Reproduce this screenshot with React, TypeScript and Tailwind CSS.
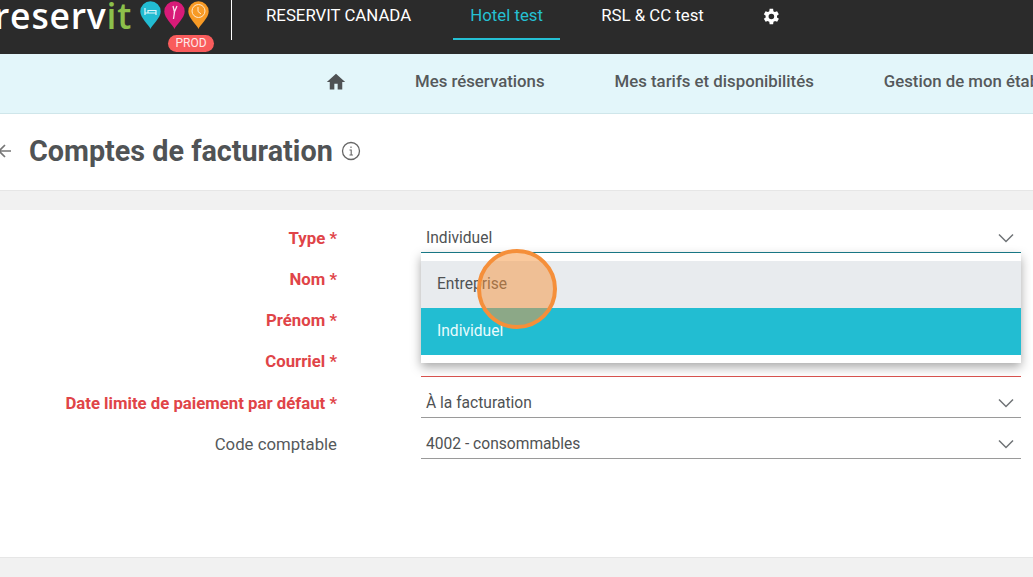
const tabs = [
  { label: 'RESERVIT CANADA', active: false, box: 'ml-[34px] mr-[42px] px-0' },
  { label: 'Hotel test', active: true, box: 'w-[107px] justify-center' },
  { label: 'RSL & CC test', active: false, box: 'ml-[41px] px-0' },
];

const menu = ['Mes réservations', 'Mes tarifs et disponibilités', 'Gestion de mon établissement'];

const rows = [
  { label: 'Type *', value: 'Individuel', required: true, select: true, line: 'border-[#1a7f8e]' },
  { label: 'Nom *', value: '', required: true, select: false, line: 'border-transparent' },
  { label: 'Prénom *', value: '', required: true, select: false, line: 'border-transparent' },
  { label: 'Courriel *', value: '', required: true, select: false, line: 'border-[#d9534f]' },
  { label: 'Date limite de paiement par défaut *', value: 'À la facturation', required: true, select: true, line: 'border-[#9a9a9a]' },
  { label: 'Code comptable', value: '4002 - consommables', required: false, select: true, line: 'border-[#9a9a9a]' },
];

function Pin({ color, children }: { color: string; children: React.ReactNode }) {
  return (
    <svg width="21" height="28" viewBox="0 0 21 28">
      <path d="M10.5 28 C9 24 0.3 17 0.3 10.5 a10.200 10.200 0 0 1 20.400 0 C20.700 17 12 24 10.500 28Z" fill={color} />
      {children}
    </svg>
  );
}

function Logo() {
  return (
    <div className="relative w-[231px] h-full shrink-0">
      <div className="absolute left-[-6px] top-[-5px] text-[35.500px] leading-[40px] tracking-[0.8px] text-white font-['Open_Sans',sans-serif] font-semibold whitespace-nowrap">
        reserv<span className="text-[#8cc04b]">it</span>
      </div>
      <div className="absolute left-[140px] top-[1px] flex gap-[3px]">
        <Pin color="#22bcd2">
          <path d="M5 7v7M5 12h11v2M16 12V9.500H8V12" fill="none" stroke="#dff6fa" strokeWidth="1.200" />
        </Pin>
        <Pin color="#d81b78">
          <path d="M9 5l1.500 6-1 7M13 5l-3 7" fill="none" stroke="#fbe4ef" strokeWidth="1.300" />
        </Pin>
        <Pin color="#f79a25">
          <circle cx="10.500" cy="10" r="6.500" fill="none" stroke="#fde9cd" strokeWidth="1" />
          <path d="M10 6v4.500l3 2.500" fill="none" stroke="#fde9cd" strokeWidth="1" />
        </Pin>
      </div>
      <span className="absolute left-[168px] top-[35px] h-[17px] w-[46px] rounded-full bg-[#f95c5c] text-[#fde8e8] text-[12px] leading-[17px] text-center">
        PROD
      </span>
    </div>
  );
}

function Chevron() {
  return (
    <svg width="16" height="10" viewBox="0 0 16 10" fill="none" stroke="#6f7376" strokeWidth="1.500" className="mt-[5px] shrink-0">
      <path d="M1 1.500 8 8.500 15 1.500" />
    </svg>
  );
}

export default function App() {
  return (
    <div className="w-[1033px] h-[577px] overflow-hidden bg-white font-['Roboto',sans-serif] text-[#4f5254] relative">
      {/* Top bar */}
      <header className="h-[54px] bg-[#2b2b2b] flex">
        <Logo />
        <div className="w-px h-[40px] bg-white shrink-0" />
        <nav className="flex text-white text-[16.800px] whitespace-nowrap">
          {tabs.map((t) => (
            <div
              key={t.label}
              className={`h-[40px] flex items-center pb-[6px] border-b-2 ${t.box} ${
                t.active ? 'text-[#25c0d3] border-[#25c0d3]' : 'border-transparent'
              }`}
            >
              {t.label}
            </div>
          ))}
          <div className="h-[32px] flex items-center ml-[56px]">
            <svg width="21" height="21" viewBox="0 0 24 24" fill="white">
              <path fillRule="evenodd" d="M19.400 13a7.800 7.800 0 0 0 0-2l2.100-1.600-2-3.500-2.500 1a7.600 7.600 0 0 0-1.700-1L15 3.200h-4l-.4 2.700a7.600 7.600 0 0 0-1.700 1l-2.500-1-2 3.500L6.500 11a7.800 7.800 0 0 0 0 2l-2.100 1.600 2 3.500 2.500-1a7.600 7.600 0 0 0 1.700 1l.4 2.700h4l.4-2.700a7.600 7.600 0 0 0 1.700-1l2.500 1 2-3.500L19.400 13ZM13 15.200a3.200 3.200 0 1 1 0-6.400 3.200 3.200 0 0 1 0 6.400Z" />
            </svg>
          </div>
        </nav>
      </header>

      {/* Secondary menu */}
      <div className="h-[60px] bg-[#e3f6fa] border-b border-[#cfe6ea] flex items-center whitespace-nowrap text-[16.800px] font-medium text-[#55595b] pl-[326px] pb-[4px]">
        <svg width="20" height="20" viewBox="0 0 24 24" fill="#4f5254" className="shrink-0">
          <path d="M10 21v-7h4v7h5.500v-9H23L12 2 1 12h3.500v9Z" />
        </svg>
        <div className="flex gap-[70px] ml-[69px]">
          {menu.map((m) => (
            <span key={m}>{m}</span>
          ))}
        </div>
      </div>

      {/* Title */}
      <div className="h-[77px] flex items-center border-b border-[#e6e6e6] pb-[2px]">
        <svg width="12" height="16" viewBox="0 0 12 16" fill="none" stroke="#777" strokeWidth="1.700" className="shrink-0 -ml-[1px]">
          <path d="M12 8H0M6 2 0 8 6 14" />
        </svg>
        <h1 className="ml-[18px] text-[28.750px] font-bold text-[#505355] leading-none">Comptes de facturation</h1>
        <svg width="20" height="20" viewBox="0 0 20 20" fill="none" stroke="#666" className="ml-[8px] shrink-0">
          <circle cx="10" cy="10" r="8.500" strokeWidth="1.300" />
          <path d="M8.500 9h1.700v5M8.500 14h3.400M10 5.500v1.500" strokeWidth="1.100" />
        </svg>
      </div>

      <div className="h-[19px] bg-[#f1f1f1]" />

      {/* Form */}
      <div className="h-[347px] pt-[2px] relative">
        {rows.map((r) => (
          <div key={r.label} className="grid grid-cols-[337px_600px] gap-x-[84px] h-[41.200px]">
            <div
              className={`text-right text-[16.750px] pt-[15.750px] leading-[20px] ${
                r.required ? 'font-bold text-[#e04448]' : 'text-[#55595b]'
              }`}
            >
              {r.label}
            </div>
            <div className={`flex items-start justify-between pl-[5px] pr-[7px] pt-[16px] text-[15.600px] leading-[20px] border-b ${r.line}`}>
              <span>{r.value}</span>
              {r.select && <Chevron />}
            </div>
          </div>
        ))}

        {/* Open dropdown */}
        <div className="absolute left-[421px] top-[43px] w-[600px] h-[110px] bg-white py-[8px] shadow-[0_4px_10px_rgba(0,0,0,0.35)] text-[15.600px]">
          <div className="h-[47px] bg-[#e8ebee] flex items-center pl-[16px]">Entreprise</div>
          <div className="h-[47px] bg-[#22bdd2] text-[#e9fbfd] flex items-center pl-[16px]">Individuel</div>
        </div>
      </div>

      <div className="h-[20px] bg-[#f1f1f1] border-t border-[#e6e6e6]" />

      {/* Click marker */}
      <div className="absolute left-[477px] top-[249px] w-[80px] h-[80px] rounded-full border-[4px] border-[#f58f3a] bg-[#f5933c]/50" />
    </div>
  );
}
